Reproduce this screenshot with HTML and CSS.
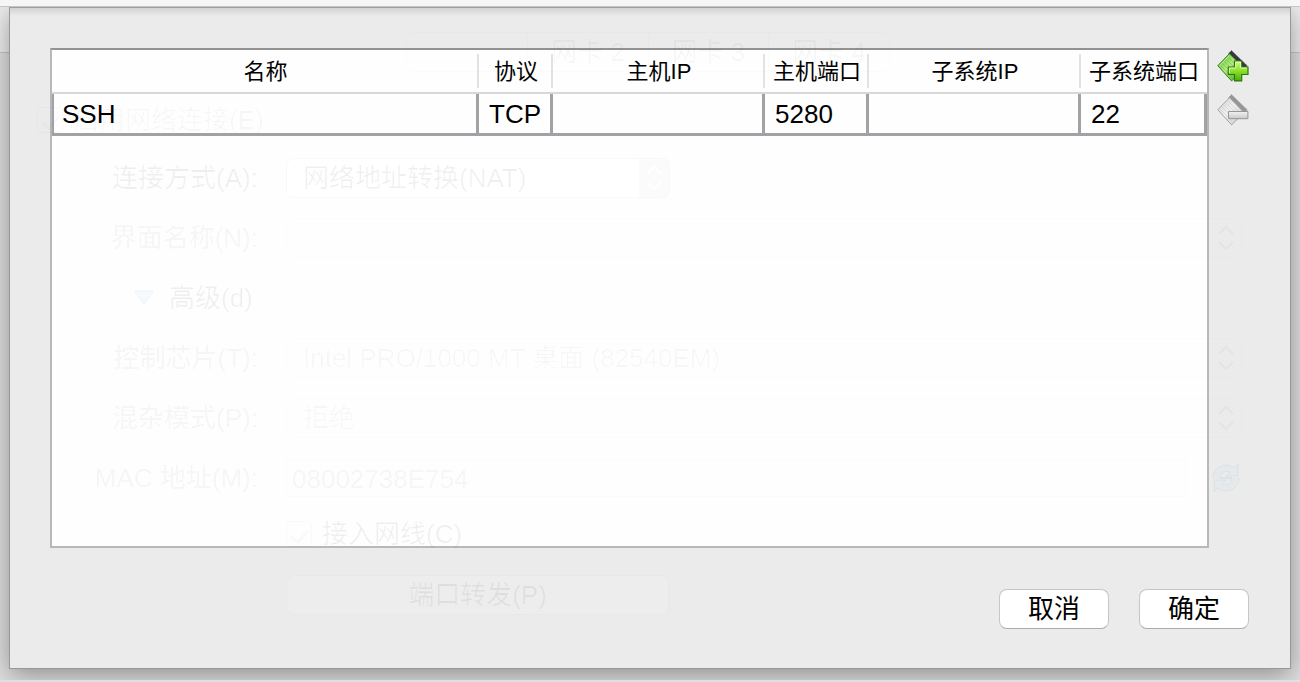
FILE: index.html
```html
<!DOCTYPE html>
<html lang="zh-CN">
<head>
<meta charset="utf-8">
<meta name="viewport" content="width=device-width, initial-scale=1">
<title>端口转发规则</title>
<link rel="stylesheet" href="styles.css">
</head>
<body>
<div class="titlebar"></div>
<div class="window">
  <main class="sheet">
    <div class="rules">
      <div class="table-box">
        <table class="table">
          <colgroup>
            <col>
            <col class="col-protocol">
            <col class="col-ip">
            <col class="col-port">
            <col class="col-ip">
            <col class="col-guest-port">
          </colgroup>
          <thead>
            <tr><th scope="col">名称</th><th scope="col">协议</th><th scope="col">主机IP</th><th scope="col">主机端口</th><th scope="col">子系统IP</th><th scope="col">子系统端口</th></tr>
          </thead>
          <tbody>
            <tr><td>SSH</td><td>TCP</td><td></td><td>5280</td><td></td><td>22</td></tr>
          </tbody>
        </table>
      </div>
      <div class="tools">
        <button class="tool" type="button" aria-label="添加规则">
          <svg viewBox="0 0 32 32" width="32" height="32">
            <defs>
              <linearGradient id="card" x1="0" y1="0" x2="1" y2="1"><stop offset="0" stop-color="#4fbd22"/><stop offset=".45" stop-color="#b4ec86"/><stop offset="1" stop-color="#2f9e08"/></linearGradient>
              <linearGradient id="plus" x1="0" y1="0" x2="0" y2="1"><stop offset="0" stop-color="#d0fb8e"/><stop offset=".5" stop-color="#8be02a"/><stop offset="1" stop-color="#46ad08"/></linearGradient>
            </defs>
            <path d="M14.500.500 30.500 16 27 19 11.500 3.500Z" fill="#38383c" stroke="#666" stroke-width=".8" stroke-dasharray="1.500 1"/>
            <path d="M.8 15.700 12.500 3.700 27 18.500 14.600 30.900Z" fill="url(#card)" stroke="#2f7a14" stroke-width="1"/>
            <path d="M3.500 15.500 15 27M5.500 13.500 17 25M7.500 11.500 19 23M9.500 9.500 21 21M11.500 7.500 23 19" stroke="#3f9f1a" stroke-width=".6" opacity=".6"/>
            <path d="M2.500 15.500 12.500 5.500" stroke="#d8f8b8" stroke-width="1" opacity=".6"/>
            <path d="M17.500 11h7.200v6h6.300v7.500h-6.300v6.400h-7.200v-6.400h-6.200V17h6.200Z" fill="url(#plus)" stroke="#2f760a" stroke-width="1.200"/>
            <path d="M18.600 17.800v-5.700h5v5.900h6.300M12.400 23v-4.900h6" fill="none" stroke="#efffd0" stroke-width="1" opacity=".8"/>
          </svg>
        </button>
        <button class="tool" type="button" aria-label="删除规则">
          <svg viewBox="0 0 32 32" width="32" height="32">
            <defs>
              <linearGradient id="card-off" x1="0" y1="0" x2="1" y2="1"><stop offset="0" stop-color="#cfcfcf"/><stop offset=".45" stop-color="#f0f0f0"/><stop offset="1" stop-color="#c4c4c4"/></linearGradient>
              <linearGradient id="minus" x1="0" y1="0" x2="0" y2="1"><stop offset="0" stop-color="#f3f3f3"/><stop offset="1" stop-color="#c8c8c8"/></linearGradient>
            </defs>
            <path d="M14.500.500 30.500 16 27 19 11.500 3.500Z" fill="#969696" stroke="#aaa" stroke-width=".8" stroke-dasharray="1.500 1"/>
            <path d="M.8 15.700 12.500 3.700 27 18.500 14.600 30.900Z" fill="url(#card-off)" stroke="#a2a2a2" stroke-width="1"/>
            <path d="M3.500 15.500 15 27M5.500 13.500 17 25M7.500 11.500 19 23M9.500 9.500 21 21M11.500 7.500 23 19" stroke="#b4b4b4" stroke-width=".6" opacity=".6"/>
            <path d="M11.500 17.500h19.400v7.200H11.500Z" fill="url(#minus)" stroke="#969696" stroke-width="1"/>
          </svg>
        </button>
      </div>
    </div>
    <div class="actions">
      <button class="button" type="button">取消</button>
      <button class="button" type="button">确定</button>
    </div>

    <div class="ghost" inert>
      <div class="tabs">
        <button class="tab tab-current" type="button">网卡 1</button>
        <button class="tab" type="button">网卡 2</button>
        <button class="tab" type="button">网卡 3</button>
        <button class="tab" type="button">网卡 4</button>
      </div>
      <div class="enable"><input class="check" type="checkbox" id="enable" checked><label for="enable">启用网络连接(E)</label></div>
      <div class="form">
        <label class="label" for="attach">连接方式(A):</label>
        <div class="field field-short"><select class="select select-on" id="attach"><option>网络地址转换(NAT)</option></select><svg class="chevrons" viewBox="0 0 16 26" width="16" height="26"><path d="M1 9 8 2l7 7M1 17l7 7 7-7"/></svg></div>

        <label class="label dim" for="iface">界面名称(N):</label>
        <div class="field"><select class="select" id="iface"><option></option></select><svg class="chevrons" viewBox="0 0 16 26" width="16" height="26"><path d="M1 9 8 2l7 7M1 17l7 7 7-7"/></svg></div>

        <button class="advanced" type="button"><svg viewBox="0 0 20 16" width="20" height="16"><path d="M1 1h18l-9 13Z" fill="#b8e8f4" fill-opacity=".12" stroke="#7ab" stroke-opacity=".12"/></svg>高级(d)</button>

        <label class="label dim" for="chip">控制芯片(T):</label>
        <div class="field"><select class="select" id="chip"><option>Intel PRO/1000 MT 桌面 (82540EM)</option></select><svg class="chevrons" viewBox="0 0 16 26" width="16" height="26"><path d="M1 9 8 2l7 7M1 17l7 7 7-7"/></svg></div>

        <label class="label dim" for="mode">混杂模式(P):</label>
        <div class="field"><select class="select" id="mode"><option>拒绝</option></select><svg class="chevrons" viewBox="0 0 16 26" width="16" height="26"><path d="M1 9 8 2l7 7M1 17l7 7 7-7"/></svg></div>

        <label class="label dim" for="mac">MAC 地址(M):</label>
        <div class="field mac"><input class="text" id="mac" type="text" value="08002738E754"><svg viewBox="0 0 28 32" width="28" height="32"><path d="M1 16C1 5 14-1 22 6l4-4v12H14l4-4c-4-2-9 0-10 6h12M27 16c0 11-13 17-21 10l-4 4V18h12l-4 4c4 2 9 0 10-6H8" fill="#b0dcf4" fill-opacity=".1" stroke="#6f9cb4" stroke-opacity=".1"/></svg></div>

        <div class="cable"><input class="check" type="checkbox" id="cable" checked><label for="cable">接入网线(C)</label></div>
        <button class="forward" type="button">端口转发(P)</button>
      </div>
    </div>
  </main>
</div>
<div class="window-edge"></div>
</body>
</html>
```

FILE: styles.css
```css
* {
  box-sizing: border-box;
}

body {
  margin: 0;
  min-height: 100vh;
  display: flex;
  flex-direction: column;
  background: #d6d6d6;
  color: #000;
  font: 26px/30px "Liberation Sans", "Noto Sans CJK SC", sans-serif;
}

button,
input,
select {
  margin: 0;
  font: inherit;
  color: inherit;
}

/* Parent window */
.titlebar {
  position: relative;
  z-index: 1;
  height: 7px;
  background: #f6f6f6;
  border-bottom: 1px solid #c4c4c4;
}

.window {
  flex: 1;
  display: flex;
  padding: 0 10px 12px;
  overflow: hidden;
  background: linear-gradient(#ececec 45px, #c4c4c4 45px, #c4c4c4 46px, #dedede 46px);
}

.window-edge {
  height: 2px;
  background: #e0e0e0;
}

/* Sheet */
.sheet {
  position: relative;
  flex: 1;
  display: flex;
  flex-direction: column;
  gap: 41px;
  padding: 41px 41px 39px 40px;
  background: linear-gradient(#cfcfcf, #dedede 5px, #ebebeb 9px);
  box-shadow: inset 0 1px #a0a0a0, 0 0 0 1px #989898, 0 6px 24px rgb(0 0 0 / 38%);
}

.rules {
  flex: 1;
  display: flex;
  gap: 8px;
}

.table-box {
  flex: 1;
  border: 2px solid #b8b8b8;
  border-top-color: #929292;
  background: #fefefe;
}

.table {
  width: 100%;
  table-layout: fixed;
  border-collapse: separate;
  border-spacing: 0;
}

.col-protocol { width: 74px; }
.col-ip { width: 212px; }
.col-port { width: 104px; }
.col-guest-port { width: 126px; }

.table th {
  height: 44px;
  padding: 2px 0 0;
  border-bottom: 2px solid #d8d8d8;
  background: linear-gradient(#e2e2e2, #e2e2e2) right 4px / 2px 34px no-repeat;
  font-size: 22px;
  font-weight: 400;
  white-space: nowrap;
}

.table th:last-child {
  background: none;
}

.table td {
  height: 42px;
  padding: 0 10px;
  border: solid #a1a1a6;
  border-width: 0 3px 3px 0;
}

.table td:first-child {
  padding-left: 8px;
  border-left-width: 2px;
}

.tools {
  display: flex;
  flex-direction: column;
  gap: 12px;
  padding-top: 2px;
}

.tool {
  display: block;
  width: 32px;
  height: 32px;
  padding: 0;
  border: 0;
  background: none;
}

.tool svg {
  display: block;
}

.actions {
  display: flex;
  justify-content: flex-end;
  gap: 30px;
}

.button {
  width: 110px;
  height: 40px;
  padding: 0;
  border: 1px solid #c6c6c6;
  border-bottom-color: #acacac;
  border-radius: 8px;
  background: #fff;
}

/* Network settings form showing faintly through the sheet */
.ghost {
  position: absolute;
  inset: 0;
  padding: 25px 48px 0 27px;
  pointer-events: none;
  color: rgb(0 0 0 / 6%);
}

.tabs {
  display: grid;
  grid-template-columns: repeat(4, 1fr);
  width: 484px;
  margin-left: calc(50% - 234px);
  border: 1px solid rgb(0 0 0 / 1%);
  border-radius: 8px;
}

.tab {
  height: 38px;
  padding: 0;
  border: 0;
  border-left: 1px solid rgb(0 0 0 / 1%);
  background: none;
  color: rgb(0 0 0 / 4%);
}

.tab-current {
  border-left: 0;
  color: rgb(0 0 0 / 1%);
}

.enable,
.cable {
  display: flex;
  align-items: center;
  gap: 10px;
}

.enable {
  height: 76px;
  padding-top: 20px;
  color: rgb(0 0 0 / 3%);
}

.check {
  appearance: none;
  display: grid;
  place-items: center;
  width: 26px;
  height: 26px;
  border: 1px solid rgb(0 0 0 / 2%);
  border-radius: 4px;
}

.check::after {
  content: "";
  width: 8px;
  height: 14px;
  border: solid rgb(0 0 0 / 2%);
  border-width: 0 3px 3px 0;
  transform: rotate(40deg);
}

.form {
  display: grid;
  grid-template-columns: 221px 1fr;
  grid-template-rows: repeat(6, 60px) 52px 70px;
  column-gap: 28px;
  align-items: center;
}

.label {
  text-align: right;
}

.dim {
  color: rgb(0 0 0 / 5%);
}

.field {
  display: grid;
  align-items: center;
}

.field > * {
  grid-area: 1 / 1;
}

.field-short {
  width: 384px;
}

.select {
  appearance: none;
  width: 100%;
  height: 40px;
  padding: 0 16px;
  border: 1px solid rgb(0 0 0 / 1%);
  border-radius: 8px;
  background: none;
  color: rgb(0 0 0 / 3%);
}

.select-on {
  border-color: rgb(0 0 0 / 2%);
  background: linear-gradient(90deg, #fff 352px, rgb(0 0 0 / 1%) 352px);
  color: rgb(0 0 0 / 6%);
}

.chevrons {
  justify-self: end;
  margin-right: 8px;
  fill: none;
  stroke: rgb(0 0 0 / 3%);
  stroke-width: 2;
}

.field-short .chevrons {
  stroke: #fff;
}

.advanced {
  grid-column: 1 / -1;
  display: flex;
  align-items: center;
  gap: 15px;
  padding: 0 0 0 97px;
  border: 0;
  background: none;
}

.mac {
  grid-template-columns: 1fr 28px;
  gap: 26px;
  padding-right: 2px;
}

.mac > * {
  grid-area: auto;
}

.text {
  height: 38px;
  padding: 2px 5px 0;
  border: 1px solid rgb(0 0 0 / 1%);
  background: none;
  color: rgb(0 0 0 / 5%);
}

.cable,
.forward {
  grid-column: 2;
}

.forward {
  width: 383px;
  height: 40px;
  padding: 0;
  border: 1px solid rgb(0 0 0 / 2%);
  border-radius: 8px;
  background: rgb(255 255 255 / 10%);
}
```
